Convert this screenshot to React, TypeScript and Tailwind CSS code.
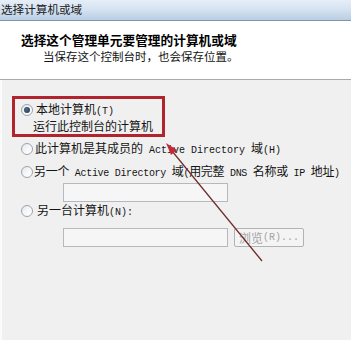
import React from "react";

const CJK = { fontFamily: '"Noto Sans CJK SC", "Noto Sans", sans-serif' };

function Mono({ children }: { children: React.ReactNode }) {
  return (
    <span className="text-[10px] font-['Liberation_Mono',monospace] whitespace-pre">{children}</span>
  );
}

function Radio({ checked }: { checked?: boolean }) {
  return (
    <span className="w-[12px] h-[12px] rounded-full border border-[#9aa3ad] bg-gradient-to-br from-[#e4e7ea] via-[#f6f7f8] to-[#ffffff] flex items-center justify-center shrink-0">
      {checked && (
        <span className="w-[6px] h-[6px] rounded-full bg-[radial-gradient(circle_at_40%_40%,#4f6a86,#243446)]" />
      )}
    </span>
  );
}

export default function App() {
  return (
    <div
      className="relative w-[351px] h-[340px] overflow-hidden bg-[#f0f0f0] text-[#141414] flex flex-col"
      style={CJK}
    >
      {/* title bar */}
      <div className="h-[21px] shrink-0 bg-gradient-to-b from-[#e6eef8] via-[#d4e2f1] to-[#b9cde3] border-b border-[#8094ab] flex items-center pl-[1px] text-[11.6px] leading-none text-[#202020]">
        选择计算机或域
      </div>
      {/* header */}
      <div className="h-[59px] shrink-0 bg-white border-b border-[#a9a9a9] flex flex-col pt-[11px]">
        <div className="pl-[21px] text-[12.7px] font-bold leading-[16px] text-black">
          选择这个管理单元要管理的计算机或域
        </div>
        <div className="pl-[43px] text-[11.5px] leading-[14px] mt-[1px]">
          当保存这个控制台时，也会保存位置。
        </div>
      </div>
      {/* body */}
      <div className="flex-1 border-l-2 border-l-[#fbfbfb] flex flex-col pl-[19px] pt-[22px] text-[12px]">
        <div className="h-[16px] flex items-center gap-[3px]">
          <Radio checked />
          <span className="leading-[16px]">
            本地计算机<Mono>(T)</Mono>
          </span>
        </div>
        <div className="h-[16px] pl-[12px] leading-[16px]">运行此控制台的计算机</div>
        <div className="h-[16px] mt-[7px] flex items-center gap-[2px]">
          <Radio />
          <span className="leading-[16px] whitespace-nowrap">
            此计算机是其成员的<Mono> Active Directory </Mono>域<Mono>(H)</Mono>
          </span>
        </div>
        <div className="h-[16px] mt-[7px] flex items-center gap-[1px]">
          <Radio />
          <span className="leading-[16px] whitespace-nowrap tracking-[-0.3px]">
            另一个<Mono> Active Directory </Mono>域<Mono>(</Mono>用完整<Mono> DNS </Mono>名称或<Mono> IP </Mono>地址<Mono>)</Mono>
          </span>
        </div>
        <div className="mt-[3px] ml-[42px] w-[165px] h-[19px] border border-[#b5b8bd] bg-[#f6f6f6]" />
        <div className="h-[16px] mt-[1px] flex items-center gap-[4px]">
          <Radio />
          <span className="leading-[16px]">
            另一台计算机<Mono>(N):</Mono>
          </span>
        </div>
        <div className="mt-[9px] ml-[42px] flex gap-[6px]">
          <div className="w-[165px] h-[19px] border border-[#b5b8bd] bg-[#f6f6f6]" />
          <div className="w-[70px] h-[19px] border border-[#b3b3b3] rounded-[2px] bg-[#f4f4f4] flex items-center pl-[4px] text-[12px] leading-none text-[#a3a3a3]">
            浏览<Mono>(R)...</Mono>
          </div>
        </div>
      </div>

      {/* annotation: red box */}
      <div className="absolute left-[12px] top-[96px] w-[153px] h-[41px] border-[3px] border-[#b1232d] pointer-events-none" />
      {/* annotation: arrow */}
      <svg className="absolute left-0 top-0 pointer-events-none" width="351" height="340" viewBox="0 0 351 340">
        <line x1="262" y1="261" x2="172" y2="151" stroke="#6e2b2b" strokeWidth="1.2" />
        <polygon points="166,143 177,150 171,155" fill="#c42a36" />
      </svg>
    </div>
  );
}
